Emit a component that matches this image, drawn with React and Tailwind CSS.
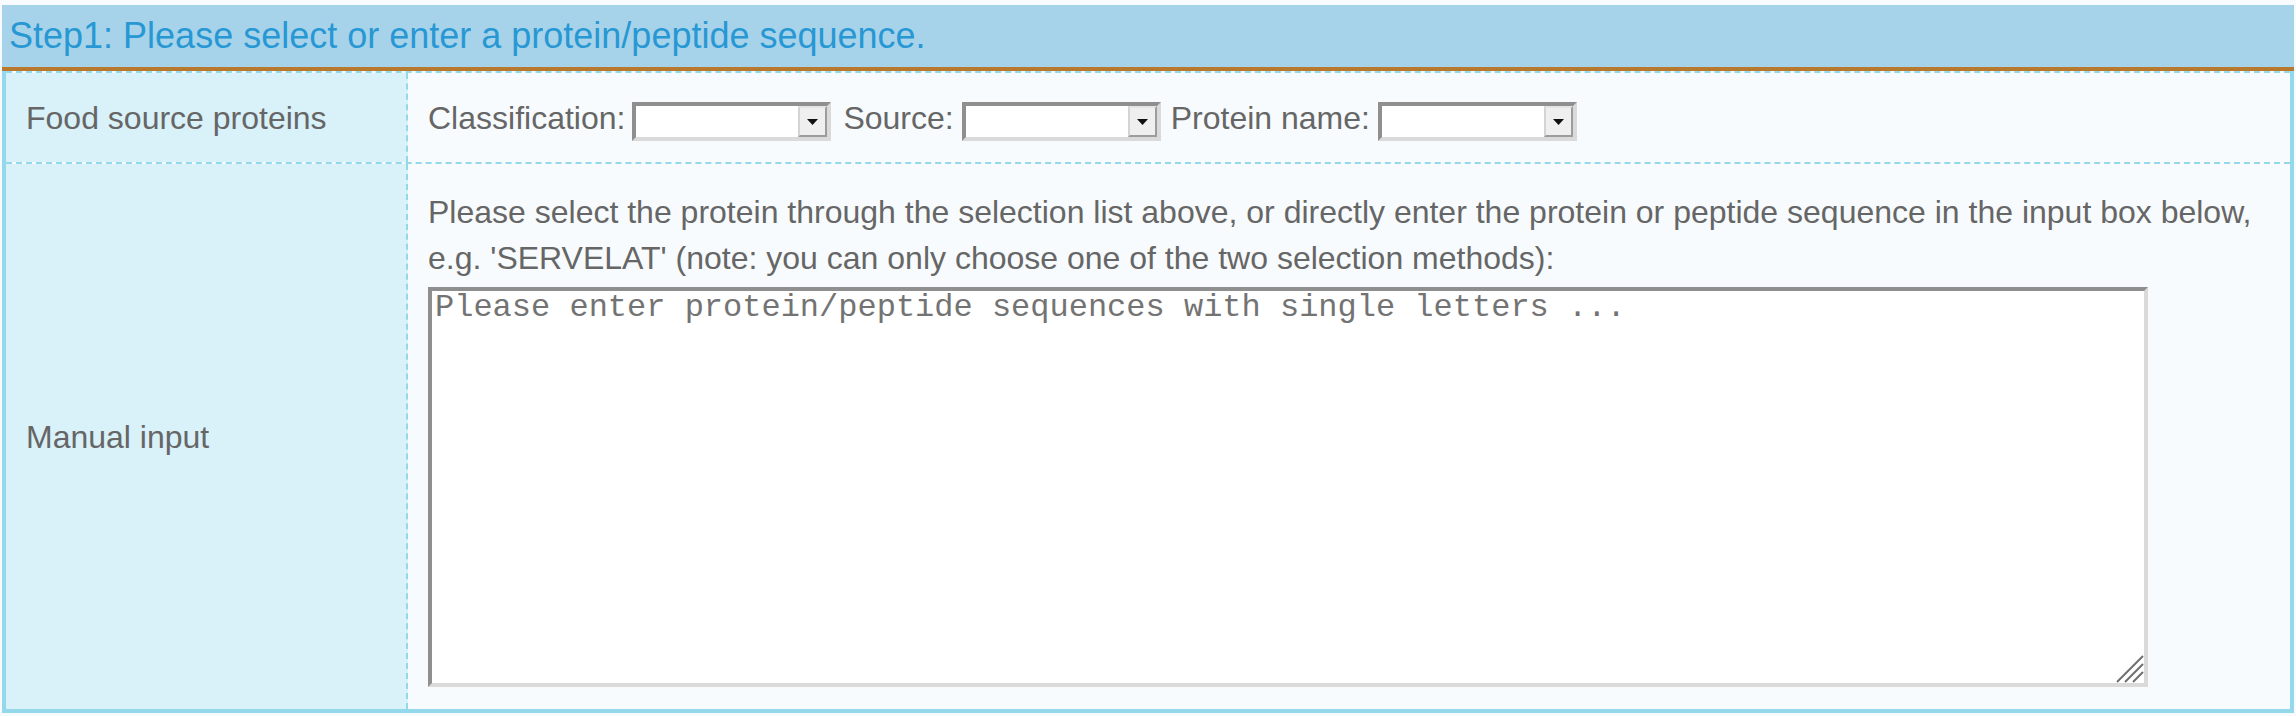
import React from 'react';

const FakeSelect = ({ className = '' }) => {
  return (
    <div className={`mt-[8px] flex h-[39px] w-[199px] border-4 border-t-[#8f8f8f] border-l-[#8f8f8f] border-r-[#dadada] border-b-[#dadada] bg-white ${className}`}>
      <div className="flex-1" />
      <div className="flex h-full w-[29px] items-center justify-center border-2 border-t-[#e4e4e4] border-l-[#d4d4d4] border-r-[#9c9c9c] border-b-[#9c9c9c] bg-[#efefef]">
        <svg width="11" height="6" viewBox="0 0 11 6">
          <polygon points="0,0 11,0 5.5,6" fill="#111" />
        </svg>
      </div>
    </div>
  );
};

const App = () => {
  return (
    <div className="h-[716px] w-full bg-[#f7fbfd] px-[2px] pt-[5px] font-['Liberation_Sans',Arial,sans-serif]">
      <div className="flex h-[66px] items-center border-b-4 border-[#b8782d] bg-[#a7d3ea] pl-[7px] text-[36px] text-[#2798d3]">
        Step1: Please select or enter a protein/peptide sequence.
      </div>

      <div className="border-x-4 border-b-4 border-[#93d8eb] text-[32px] text-[#666666]">
        {/* food source row */}
        <div className="flex h-[91px] border-t-2 border-dashed border-[#93d8eb]">
          <div className="flex w-[402px] items-center border-r-2 border-dashed border-[#93d8eb] bg-[#d9f1f9] px-[20px]">
            Food source proteins
          </div>
          <div className="flex flex-1 items-center px-[20px]">
            <span>Classification:</span>
            <FakeSelect className="ml-[7px]" />
            <span className="ml-[12px]">Source:</span>
            <FakeSelect className="ml-[8px]" />
            <span className="ml-[10px]">Protein name:</span>
            <FakeSelect className="ml-[8px]" />
          </div>
        </div>

        {/* manual input row */}
        <div className="flex h-[547px] border-t-2 border-dashed border-[#93d8eb]">
          <div className="flex w-[402px] items-center border-r-2 border-dashed border-[#93d8eb] bg-[#d9f1f9] px-[20px]">
            Manual input
          </div>
          <div className="flex-1 px-[20px] pt-[25px]">
            <p className="leading-[46px]">
              Please select the protein through the selection list above, or directly enter the protein or peptide sequence in the input box below,
              <br />
              e.g. 'SERVELAT' (note: you can only choose one of the two selection methods):
            </p>
            <div className="relative mt-[6px] h-[400px] w-[1720px]">
              <textarea
                placeholder="Please enter protein/peptide sequences with single letters ..."
                className="block h-full w-full resize-none border-4 border-t-[#8f8f8f] border-l-[#8f8f8f] border-r-[#dadada] border-b-[#dadada] bg-white px-[3px] pt-[1px] font-['Liberation_Mono',monospace] text-[32px] leading-[32px] text-[#333] outline-none placeholder:text-[#737373]"
              />
              <svg className="pointer-events-none absolute bottom-[4px] right-[4px]" width="28" height="28" viewBox="0 0 28 28">
                <line x1="1" y1="27" x2="27" y2="1" stroke="#6e6e6e" strokeWidth="2" />
                <line x1="9" y1="27" x2="27" y2="9" stroke="#6e6e6e" strokeWidth="2" />
                <line x1="17" y1="27" x2="27" y2="17" stroke="#6e6e6e" strokeWidth="2" />
              </svg>
            </div>
          </div>
        </div>
      </div>
    </div>
  );
};

export default App;
